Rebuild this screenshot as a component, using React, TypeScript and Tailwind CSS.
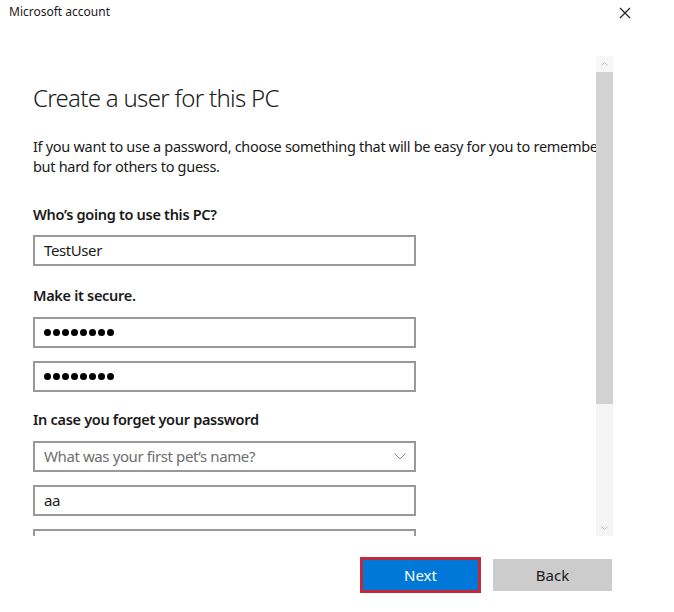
import React from 'react';

const font = { fontFamily: '"Noto Sans", "Open Sans", sans-serif' };

function Field({ children, className = '' }: { children?: React.ReactNode; className?: string }) {
  return (
    <div className={`w-[383px] h-[31px] border-2 border-[#999999] bg-white flex items-center px-[9px] text-[15px] tracking-[-0.4px] text-[#1a1a1a] ${className}`}>
      {children}
    </div>
  );
}

function Dots() {
  return (
    <div className="flex gap-[2px]">
      {Array.from({ length: 8 }).map((_, i) => (
        <span key={i} className="w-[7px] h-[7px] rounded-full bg-black" />
      ))}
    </div>
  );
}

export default function App() {
  return (
    <div className="w-[674px] h-[612px] bg-white relative overflow-hidden text-[#1a1a1a]" style={font}>
      {/* Title bar */}
      <div className="h-[28px] flex items-start justify-between">
        <span className="pl-[9px] pt-[4px] text-[12px] leading-[16px]">Microsoft account</span>
        <svg className="mr-[43px] mt-[7px]" width="12" height="12" viewBox="0 0 12 12">
          <path d="M1 1L11 11M11 1L1 11" stroke="#222" strokeWidth="1.2" />
        </svg>
      </div>

      {/* Scrollable area */}
      <div className="mt-[28px] h-[480px] relative overflow-hidden">
        <div className="pl-[33px]">
          <h1 className="text-[24px] font-light leading-[32px] pt-[26px] tracking-[-0.7px]">Create a user for this PC</h1>
          <p className="mt-[22px] text-[14.5px] leading-[20px] whitespace-nowrap tracking-[-0.3px]">
            If you want to use a password, choose something that will be easy for you to remember
            <br />
            but hard for others to guess.
          </p>
          <div className="mt-[28px] text-[14.5px] font-semibold leading-[20px] tracking-[-0.3px]">Who’s going to use this PC?</div>
          <Field className="mt-[11px]">TestUser</Field>
          <div className="mt-[19px] text-[14.5px] font-semibold leading-[20px] tracking-[-0.3px]">Make it secure.</div>
          <Field className="mt-[12px]"><Dots /></Field>
          <Field className="mt-[13px]"><Dots /></Field>
          <div className="mt-[17px] text-[14.5px] font-semibold leading-[20px] tracking-[-0.3px]">In case you forget your password</div>
          <Field className="mt-[12px] justify-between text-[#6e6e6e]">
            <span>What was your first pet’s name?</span>
            <svg width="12" height="7" viewBox="0 0 12 7" className="mr-[-1px]">
              <path d="M0.5 0.5L6 6L11.5 0.5" fill="none" stroke="#8a8a8a" strokeWidth="1" />
            </svg>
          </Field>
          <Field className="mt-[13px]">aa</Field>
          <Field className="mt-[13px]" />
        </div>

        {/* Scrollbar overlay */}
        <div className="absolute left-[596px] top-0 w-[17px] h-full bg-[#f5f5f5] flex flex-col">
          <div className="h-[16px] flex items-center justify-center bg-[#f7f7f7]">
            <svg width="7" height="4" viewBox="0 0 7 4">
              <path d="M0.5 3.5L3.5 0.5L6.5 3.5" fill="none" stroke="#bdbdbd" strokeWidth="1" />
            </svg>
          </div>
          <div className="h-[332px] bg-[#d2d2d2]" />
          <div className="flex-1" />
          <div className="h-[16px] flex items-center justify-center">
            <svg width="7" height="4" viewBox="0 0 7 4">
              <path d="M0.5 0.5L3.5 3.5L6.5 0.5" fill="none" stroke="#bdbdbd" strokeWidth="1" />
            </svg>
          </div>
        </div>
      </div>

      {/* Buttons */}
      <div className="mt-[21px] flex justify-end items-center gap-[12px] pr-[62px]">
        <button className="w-[121px] h-[36px] bg-[#0078d7] border-[3px] border-[#c4283c] text-white text-[15px]">Next</button>
        <button className="w-[119px] h-[32px] bg-[#cccccc] text-[#1a1a1a] text-[15px]">Back</button>
      </div>
    </div>
  );
}
